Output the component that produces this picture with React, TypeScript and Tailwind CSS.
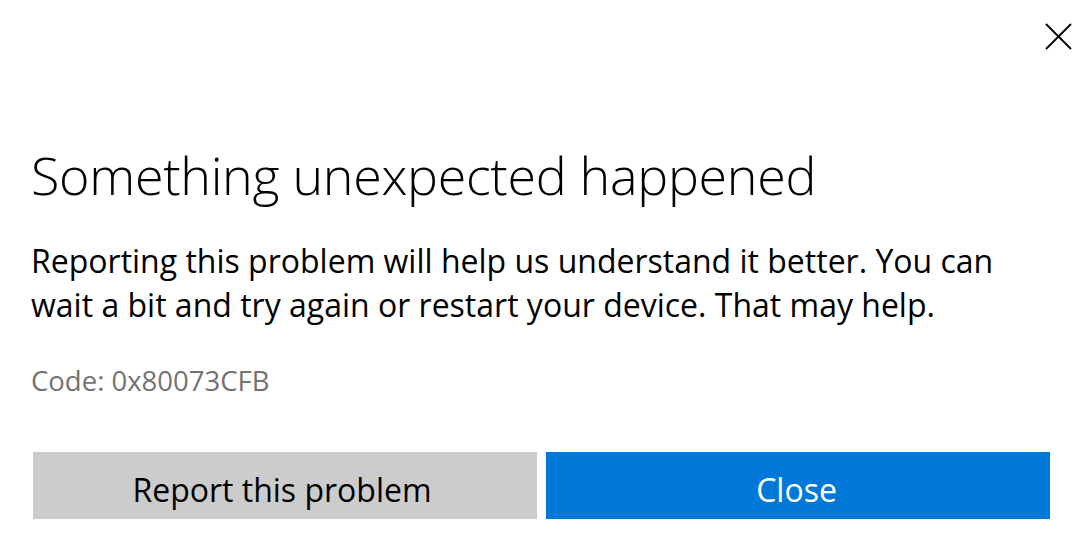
import React from "react";

export default function App() {
  return (
    <div
      className="w-[1089px] h-[555px] bg-white relative overflow-hidden text-black"
      style={{ fontFamily: '"Open Sans", "Noto Sans", sans-serif' }}
    >
      <button className="absolute left-[1040px] top-[18px] w-[37px] h-[36px] flex items-center justify-center">
        <svg width="27" height="27" viewBox="0 0 27 27">
          <path d="M1 1 L26 26 M26 1 L1 26" stroke="#000" strokeWidth="1.8" />
        </svg>
      </button>
      <div className="pl-[31px] pt-[140px] flex flex-col">
        <h1 className="text-[52px] font-light leading-[70px] whitespace-nowrap tracking-[-0.3px]">
          Something unexpected happened
        </h1>
        <p className="mt-[29px] text-[32px] leading-[44px] whitespace-nowrap">
          Reporting this problem will help us understand it better. You can
          <br />
          wait a bit and try again or restart your device. That may help.
        </p>
        <p className="mt-[38px] text-[27.5px] leading-[32px] text-[#737373] whitespace-nowrap">
          Code: 0x80073CFB
        </p>
      </div>
      <div className="absolute left-[33px] top-[452px] flex gap-[9px]">
        <button className="w-[504px] h-[67px] pt-2 pr-[6px] bg-[#cccccc] text-[32px] text-black flex items-center justify-center">
          Report this problem
        </button>
        <button className="w-[504px] h-[67px] pt-2 pr-[3px] bg-[#0078d7] text-[32px] text-white flex items-center justify-center">
          Close
        </button>
      </div>
    </div>
  );
}
